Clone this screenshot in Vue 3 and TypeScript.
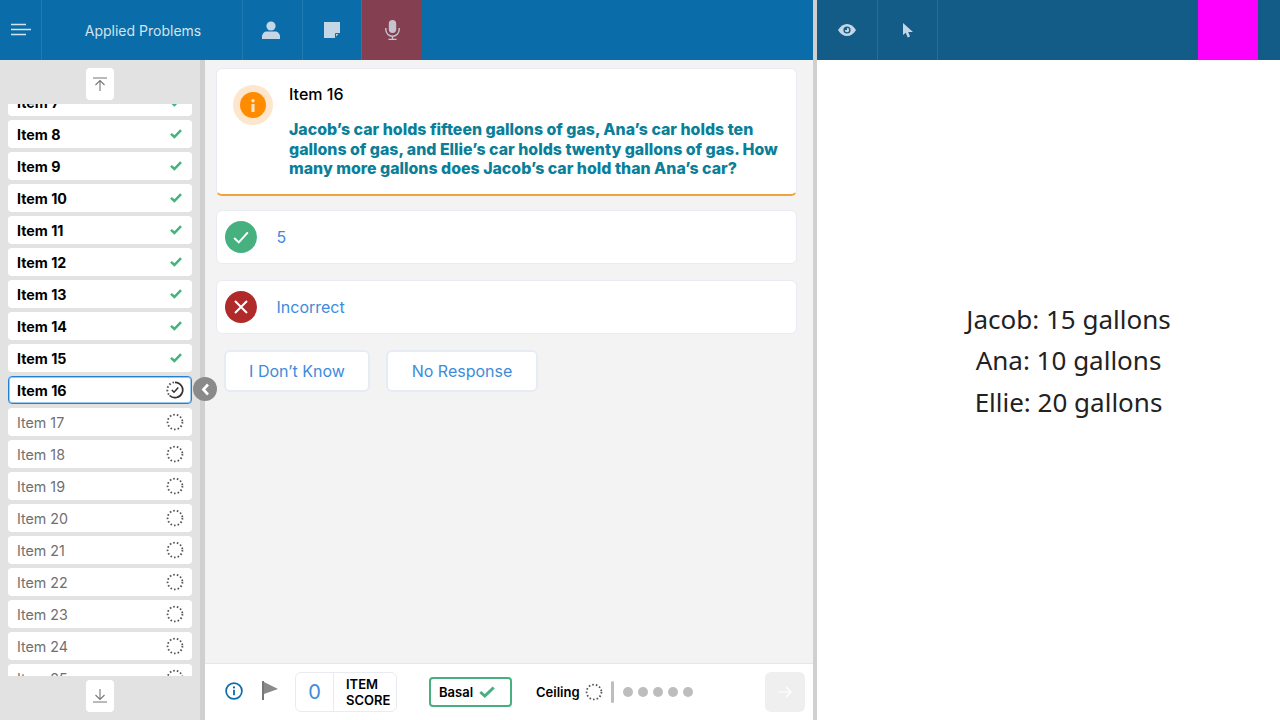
<script setup lang="ts">
interface Item { n: number; state: 'done' | 'current' | 'todo' }
const items: Item[] = []
for (let n = 7; n <= 25; n++) {
  items.push({ n, state: n < 16 ? 'done' : n === 16 ? 'current' : 'todo' })
}
const dots = [1, 2, 3, 4, 5]
</script>

<template>
  <div class="app">
    <section class="left">
      <header class="bar">
        <div class="cell menu">
          <svg width="20" height="14" viewBox="0 0 20 14"><path d="M0 1.500h15M0 6.500h20M0 11.500h15" stroke="#d5e3ee" stroke-width="1.600" fill="none"/></svg>
        </div>
        <div class="cell title">Applied Problems</div>
        <div class="cell tab">
          <svg class="nudge-r" width="18" height="18" viewBox="0 0 18 18"><circle cx="9" cy="5" r="4.600" fill="#c5d6e5"/><path d="M0 18v-2.200C0 12.500 2.400 10.500 5 10.500h8c2.600 0 5 2 5 5.300V18z" fill="#c5d6e5"/></svg>
        </div>
        <div class="cell tab note">
          <svg width="16" height="16" viewBox="0 0 16 16"><path d="M0 0h16v10.500L10.500 16H0z" fill="#c5d6e5"/><path d="M11.500 15.500v-4h4" fill="none" stroke="#0a6ca8" stroke-width="1"/></svg>
        </div>
        <div class="cell tab mic">
          <svg class="nudge-l" width="15" height="20" viewBox="0 0 15 20"><rect x="3.800" y="0" width="7.400" height="13" rx="3.700" fill="#c5c3cf"/><path d="M.8 8v1.500a6.700 6.700 0 0 0 13.400 0V8M7.500 16v3.500M3.500 19.400h8" fill="none" stroke="#c5c3cf" stroke-width="1.400"/></svg>
        </div>
      </header>
      <div class="body">
        <aside class="side">
          <div class="side-end top">
            <button class="jump" type="button">
              <svg width="14" height="14" viewBox="0 0 14 14"><path d="M0 1h14M7 14V3.500M2.500 8 7 3.500 11.500 8" fill="none" stroke="#777" stroke-width="1.100"/></svg>
            </button>
          </div>
          <ul class="list">
            <li v-for="it in items" :key="it.n" class="item" :class="it.state">
              <span class="name">Item {{ it.n }}</span>
              <svg v-if="it.state === 'done'" class="tick" width="12" height="10" viewBox="0 0 12 10"><path d="M1 4.800 4.400 8 11 1.200" fill="none" stroke="#47b07f" stroke-width="2.500"/></svg>
              <svg v-else-if="it.state === 'current'" width="18" height="18" viewBox="0 0 18 18">
                <path d="M9 1.300a7.700 7.700 0 1 1-5.400 13.200" fill="none" stroke="#333" stroke-width="1.700"/>
                <path d="M2.900 13.700A7.700 7.700 0 0 1 9 1.300" fill="none" stroke="#555" stroke-width="1.900" stroke-dasharray="1.600 2"/>
                <path d="M5.800 9 8 11.200 12.300 6.500" fill="none" stroke="#333" stroke-width="1.500"/>
              </svg>
              <svg v-else width="18" height="18" viewBox="0 0 18 18"><circle cx="9" cy="9" r="7.400" fill="none" stroke="#555" stroke-width="1.800" stroke-dasharray="1.600 2.050"/></svg>
            </li>
          </ul>
          <div class="side-end bottom">
            <button class="jump" type="button">
              <svg width="14" height="14" viewBox="0 0 14 14"><path d="M0 13h14M7 0v10.500M2.500 6 7 10.500 11.500 6" fill="none" stroke="#777" stroke-width="1.100"/></svg>
            </button>
          </div>
          <div class="collapse">
            <svg width="9" height="13" viewBox="0 0 9 13"><path d="M7 1.500 2.400 6.500 7 11.500" fill="none" stroke="#fff" stroke-width="2.600"/></svg>
          </div>
        </aside>
        <main class="main">
          <div class="content">
            <article class="card">
              <div class="halo"><div class="info">
                <svg width="4" height="13" viewBox="0 0 4 13"><circle cx="2" cy="1.700" r="1.700" fill="#ffe2c0"/><rect x=".4" y="5" width="3.200" height="8" rx=".5" fill="#ffe2c0"/></svg>
              </div></div>
              <div class="copy">
                <h2>Item 16</h2>
                <p>Jacob’s car holds fifteen gallons of gas, Ana’s car holds ten gallons of gas, and Ellie’s car holds twenty gallons of gas. How many more gallons does Jacob’s car hold than Ana’s car?</p>
              </div>
            </article>
            <div class="answer">
              <span class="mark ok"><svg width="16" height="13" viewBox="0 0 16 13"><path d="M1.200 7 5.800 11.400 14.800 1.400" fill="none" stroke="#fff" stroke-width="2"/></svg></span>
              <span class="label">5</span>
            </div>
            <div class="answer">
              <span class="mark no"><svg width="14" height="14" viewBox="0 0 14 14"><path d="M1 1l12 12M13 1 1 13" fill="none" stroke="#fff" stroke-width="2"/></svg></span>
              <span class="label">Incorrect</span>
            </div>
            <div class="actions">
              <button class="act idk" type="button">I Don’t Know</button>
              <button class="act nr" type="button">No Response</button>
            </div>
          </div>
          <footer class="foot">
            <svg class="f-info" width="18" height="18" viewBox="0 0 18 18"><circle cx="9" cy="9" r="7.900" fill="none" stroke="#0a6ca8" stroke-width="1.700"/><circle cx="9" cy="5.400" r="1.100" fill="#0a6ca8"/><rect x="8.100" y="7.800" width="1.800" height="5.400" fill="#0a6ca8"/></svg>
            <svg class="f-flag" width="16" height="20" viewBox="0 0 16 20"><path d="M0 0h2v19H0z" fill="#777"/><path d="M2 1l14 7-14 5z" fill="#8a8a8a"/></svg>
            <div class="score">
              <span class="num">0</span>
              <span class="cap">ITEM<br>SCORE</span>
            </div>
            <div class="basal">Basal
              <svg width="16" height="12" viewBox="0 0 16 12"><path d="M1.300 6 5.800 10 14.700 1.500" fill="none" stroke="#47b07f" stroke-width="3"/></svg>
            </div>
            <div class="ceiling">Ceiling
              <svg width="18" height="18" viewBox="0 0 18 18"><circle cx="9" cy="9" r="7.400" fill="none" stroke="#555" stroke-width="1.800" stroke-dasharray="1.600 2.050"/></svg>
            </div>
            <i class="rule"></i>
            <div class="dots"><b v-for="d in dots" :key="d"></b></div>
            <button class="next" type="button">
              <svg width="14" height="12" viewBox="0 0 14 12"><path d="M0 6h13M8 1l5 5-5 5" fill="none" stroke="#fff" stroke-width="1.200"/></svg>
            </button>
          </footer>
        </main>
      </div>
    </section>
    <div class="divider"></div>
    <section class="right">
      <header class="bar dark">
        <div class="cell tab first">
          <svg width="18" height="12" viewBox="0 0 18 12"><path d="M0 6C2.500 2 5.500 0 9 0s6.500 2 9 6c-2.500 4-5.500 6-9 6S2.500 10 0 6z" fill="#c5d6e5"/><circle cx="9" cy="6" r="3.600" fill="#145c88"/><path d="M9 3.800A2.200 2.200 0 1 1 6.800 6H9z" fill="#c5d6e5"/></svg>
        </div>
        <div class="cell tab">
          <svg width="10" height="15" viewBox="0 0 10 15"><path d="M0 0v12l2.800-2.300L4.700 14.500l2.300-1L5.200 9H10z" fill="#c5d6e5"/></svg>
        </div>
        <div class="spacer"></div>
        <div class="magenta"></div>
      </header>
      <div class="stim">
        <p>Jacob: 15 gallons</p>
        <p>Ana: 10 gallons</p>
        <p>Ellie: 20 gallons</p>
      </div>
    </section>
  </div>
</template>

<style>
html, body { margin: 0; overflow: hidden; background: #fff; }
</style>

<style scoped>
.app { width: 1280px; height: 720px; display: flex; font-family: Inter, "Liberation Sans", sans-serif; overflow: hidden; }
.left { width: 813px; display: flex; flex-direction: column; }
.divider { width: 4px; background: #d0d0d0; }
.right { flex: 1; display: flex; flex-direction: column; min-width: 0; }
.bar { height: 60px; flex: none; display: flex; background: #0a6ca8; }
.bar.dark { background: #145c88; }
.cell { display: flex; align-items: center; justify-content: center; border-right: 1px solid rgba(255,255,255,.1); box-sizing: border-box; flex: none; }
.menu { width: 42px; padding-left: 1px; }
.title { width: 201px; color: #d5e3ee; font-size: 14px; font-weight: 400; padding-left: 2px; }
.tab { width: 60px; }
.tab.note { width: 59px; }
.tab.first { width: 61px; }
.nudge-r { margin-right: 3px; }
.nudge-l { margin-left: 1px; }
.mic { background: #843f50; border-right: 0; }
.spacer { flex: 1; }
.magenta { width: 60px; background: #ff00ff; margin-right: 22px; }
.body { flex: 1; display: flex; min-height: 0; }
.side { width: 205px; box-sizing: border-box; background: #e2e2e2; border-right: 5px solid #d0d0d0; display: flex; flex-direction: column; position: relative; flex: none; }
.side-end { height: 44px; flex: none; display: flex; justify-content: center; box-sizing: border-box; }
.side-end.top { padding-top: 8px; }
.side-end.bottom { padding-top: 4px; }
.jump { width: 28px; height: 32px; padding: 0; border: 0; border-radius: 4px; background: #fff; display: flex; align-items: center; justify-content: center; }
.list { flex: 1; min-height: 0; overflow: hidden; list-style: none; margin: 0; padding: 0 8px; }
.item { height: 28px; margin-bottom: 4px; box-sizing: border-box; background: #fff; border-radius: 4px; display: flex; align-items: center; justify-content: space-between; padding: 0 8px 0 9px; font-size: 14.250px; }
.name { line-height: 20px; margin-top: 2px; }
.tick { margin-right: 2px; }
.item:first-child { margin-top: -16px; }
.item.done { font-weight: 700; color: #000; }
.item.current { font-weight: 700; color: #000; border: 1px solid #2580d2; box-shadow: inset 0 0 0 1px rgba(43,134,214,.45); padding: 0 7px 0 8px; }
.item.todo { color: #6f6f6f; }
.collapse { position: absolute; left: 193px; top: 317px; width: 24px; height: 24px; border-radius: 50%; background: #8a8a8a; display: flex; align-items: center; justify-content: center; }
.main { flex: 1; min-width: 0; display: flex; flex-direction: column; background: #f3f3f4; }
.content { flex: 1; min-height: 0; padding: 8px 16px 0 11px; box-sizing: border-box; }
.card { height: 128px; box-sizing: border-box; background: #fff; border: 1px solid #e8ebf2; border-bottom: 2px solid #f2a13f; border-radius: 6px; display: flex; padding: 16px 8px 0 16px; }
.halo { width: 40px; height: 40px; border-radius: 50%; background: #fde6cc; display: flex; align-items: center; justify-content: center; flex: none; }
.info { width: 26px; height: 26px; border-radius: 50%; background: #ff8c00; display: flex; align-items: center; justify-content: center; }
.copy { margin-left: 16px; }
h2 { margin: 0; font-size: 16px; line-height: 18px; font-weight: 500; color: #000; }
.copy p { margin: 17px 0 0; font-size: 15.900px; line-height: 19.500px; font-weight: 800; color: #0b7f99; }
.answer { height: 54px; margin-top: 14px; box-sizing: border-box; background: #fff; border: 1px solid #e8ebf2; border-radius: 6px; display: flex; align-items: center; padding-left: 8px; }
.answer + .answer { margin-top: 16px; }
.mark { width: 32px; height: 32px; border-radius: 50%; display: flex; align-items: center; justify-content: center; }
.ok { background: #47b07f; }
.no { background: #b02a2a; }
.label { margin-left: 19.500px; font-size: 16px; color: #3d8bdb; }
.actions { display: flex; gap: 16px; margin-top: 16px; padding-left: 8px; }
.act { height: 42px; box-sizing: border-box; padding: 0; background: #fff; border: 2px solid #e6ebf5; border-radius: 6px; font: 400 16px Inter, "Liberation Sans", sans-serif; color: #3d8bdb; }
.idk { width: 146px; }
.nr { width: 152px; }
.foot { height: 57px; flex: none; box-sizing: border-box; background: #fff; border-top: 1px solid #e6e6e6; display: flex; align-items: center; padding: 0 8px 0 20px; }
.f-info { margin-bottom: 2px; }
.f-flag { margin-left: 19px; margin-bottom: 2px; }
.score { margin-left: 17px; height: 40px; width: 102px; box-sizing: border-box; border: 1px solid #e8ebf2; border-radius: 6px; display: flex; align-items: center; }
.num { width: 38px; height: 100%; box-sizing: border-box; border-right: 1px solid #e8ebf2; display: flex; align-items: center; justify-content: center; font-size: 20px; color: #3d8bdb; }
.cap { margin-left: 12px; font-size: 13px; font-weight: 600; line-height: 16px; color: #000; }
.basal { margin-left: 32px; width: 83px; height: 30px; box-sizing: border-box; border: 2px solid #47b07f; border-radius: 4px; display: flex; align-items: center; gap: 6px; padding-left: 8px; font-size: 13px; font-weight: 600; color: #000; }
.ceiling { margin-left: 24px; display: flex; align-items: center; gap: 5px; font-size: 13px; font-weight: 600; color: #000; }
.rule { margin-left: 8px; width: 3px; height: 22px; border-radius: 2px; background: #bdbdbd; }
.dots { margin-left: 9px; display: flex; gap: 5px; }
.dots b { width: 10px; height: 10px; border-radius: 50%; background: #bdbdbd; }
.next { margin-left: auto; width: 40px; height: 40px; padding: 0; border: 0; border-radius: 6px; background: #efefef; display: flex; align-items: center; justify-content: center; }
.stim { flex: 1; display: flex; flex-direction: column; align-items: center; justify-content: center; font-family: "Noto Sans", sans-serif; font-size: 26px; color: #222; padding: 0 0 58px 40px; }
.stim p { margin: 0; line-height: 41.500px; }
</style>
